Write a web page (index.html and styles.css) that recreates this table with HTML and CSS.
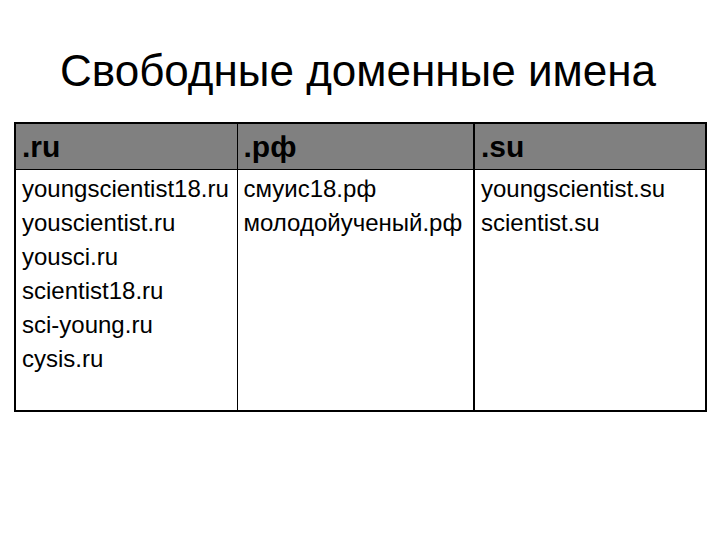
FILE: index.html
```html
<!DOCTYPE html>
<html>
<head>
<meta charset="utf-8">
<link rel="stylesheet" href="styles.css">
</head>
<body>
<div class="slide">
  <h1 class="title">Свободные доменные имена</h1>
  <table class="domains">
    <colgroup>
      <col class="c1"><col class="c2"><col class="c3">
    </colgroup>
    <thead>
      <tr><th>.ru</th><th>.рф</th><th>.su</th></tr>
    </thead>
    <tbody>
      <tr>
        <td>youngscientist18.ru<br>youscientist.ru<br>yousci.ru<br>scientist18.ru<br>sci-young.ru<br>cysis.ru</td>
        <td>смуис18.рф<br>молодойученый.рф</td>
        <td>youngscientist.su<br>scientist.su</td>
      </tr>
    </tbody>
  </table>
</div>
</body>
</html>
```
FILE: styles.css
```css
html, body {
  margin: 0;
  padding: 0;
  background: #fff;
}
.slide {
  width: 720px;
  height: 540px;
  padding: 46px 0 0 14px;
  box-sizing: border-box;
  font-family: "Liberation Sans", Arial, sans-serif;
  color: #000;
}
.title {
  margin: 0 0 0 -16px;
  width: 720px;
  text-align: center;
  font-weight: normal;
  font-size: 44px;
  line-height: 50px;
}
.domains {
  border-collapse: collapse;
  width: 691px;
  table-layout: fixed;
  margin-top: 26px;
  border: 2px solid #000;
}
.c1 { width: 222px; }
.c2 { width: 237px; }
.c3 { width: 232px; }
.domains th {
  background: #808080;
  text-align: left;
  font-size: 30px;
  font-weight: bold;
  height: 46px;
  padding: 2px 6px 0;
  border-left: 1px solid #000;
  border-bottom: 1px solid #000;
  box-sizing: border-box;
}
.domains td {
  vertical-align: top;
  font-size: 24px;
  line-height: 34px;
  padding: 2px 6px 0;
  height: 242px;
  box-sizing: border-box;
  border-left: 1px solid #000;
}
.domains th:nth-child(3), .domains td:nth-child(3) {
  border-left: 2px solid #000;
}
```
